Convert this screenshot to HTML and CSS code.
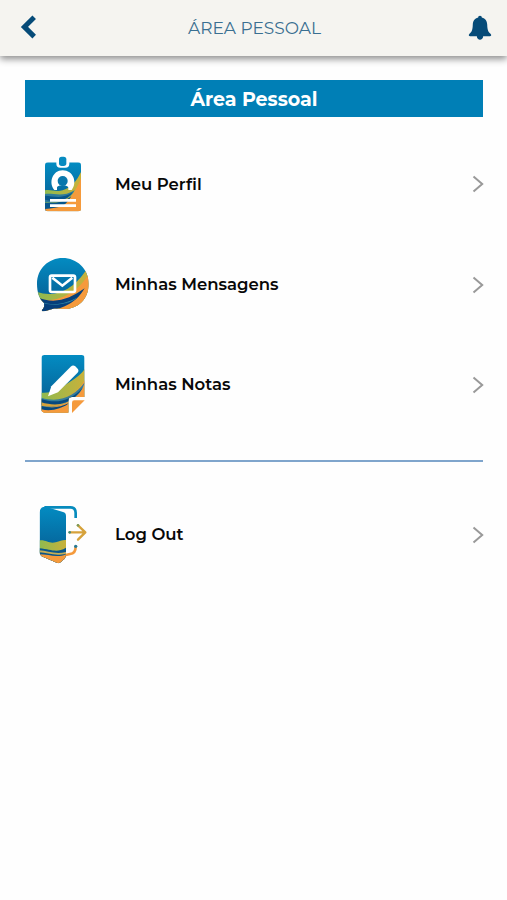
FILE: index.html
```
<!DOCTYPE html>
<html lang="pt">
    <head>
        <meta charset="UTF-8">
        <meta name="viewport" content="width=device-width, initial-scale=1.0">
        <title>Área Pessoal</title>
        <link rel="stylesheet" href="styles.css">
    </head>
    <body>
        <svg class="defs" width="0" height="0">
            <defs>
                <linearGradient id="blue" x1="0" y1="0" x2="0" y2="1">
                    <stop offset="0" stop-color="#038cc2"/>
                    <stop offset="1" stop-color="#07568c"/>
                </linearGradient>
                <linearGradient id="green" x1="0" y1="0" x2="1" y2="0">
                    <stop offset="0" stop-color="#8fba50"/>
                    <stop offset="1" stop-color="#c9b13a"/>
                </linearGradient>
                <clipPath id="card"><rect x="45" y="37" width="108" height="147" rx="9"/></clipPath>
                <clipPath id="bubble"><path d="M98 24C140 24 176 56 176 101C176 148 143 178 99 177C84 177 78 175 70 176C58 178 50 183 40 184C34 184 35 179 39 176C43 172 44 165 42 159C28 146 21 126 21 101C21 56 56 24 98 24Z"/></clipPath>
                <clipPath id="note"><path d="M44 21H154Q164 21 164 31V147H126Q115 147 115 159V194H44Q34 194 34 184V31Q34 21 44 21Z"/></clipPath>
                <clipPath id="door"><path d="M29 40Q28 20 46 20L99 36Q108 38 108 48V162Q108 175 98 181Q90 193 80 188L40 171Q29 167 29 157Z"/></clipPath>
            </defs>
        </svg>

        <header class="header">
            <a class="back" aria-label="Voltar">
                <svg width="17" height="26" viewBox="0 0 17 26">
                    <path d="M14.2 3.2L4.4 12.9L14.2 22.6" fill="none" stroke="#064b78" stroke-width="5" stroke-linejoin="miter" stroke-linecap="butt"/>
                </svg>
            </a>
            <h1 class="title">ÁREA PESSOAL</h1>
            <a class="bell" aria-label="Notificações">
                <svg width="24" height="26" viewBox="0 0 24 26">
                    <path d="M12 .7C13.2 .7 13.8 1.4 13.8 2.6C17.5 3.5 19 6.3 19.2 9.5C19.4 15 20.2 16.8 22.5 18.8C23.8 20 23.2 21.3 21.8 21.3H2.2C.8 21.3 .2 20 1.5 18.8C3.8 16.8 4.6 15 4.8 9.5C5 6.3 6.5 3.5 10.2 2.6C10.2 1.4 10.8 .7 12 .7ZM8.8 21H15.2C15 26 9 26 8.8 21Z" fill="#064b78"/>
                </svg>
            </a>
        </header>

        <main class="content">
            <h2 class="banner">Área Pessoal</h2>

            <div class="menu">
                <a class="item raised">
                    <svg class="icon" viewBox="0 0 195 210">
                        <g clip-path="url(#card)">
                            <rect x="45" y="37" width="108" height="147" fill="url(#blue)"/>
                            <path d="M45 121C62 117 78 127 98 121C125 113 141 91 153 66V184H45Z" fill="url(#green)"/>
                            <path d="M82 184C112 158 140 122 153 84V184Z" fill="#f59a3c"/>
                            <path d="M45 132C72 129 98 143 134 121C121 148 83 162 45 157Z" fill="#2f7c9b"/>
                            <path d="M45 137C72 138 97 149 128 127C112 152 77 159 45 149Z" fill="#07558b"/>
                            <path d="M45 158C76 161 103 156 124 139C106 171 78 184 45 184Z" fill="#07558b"/>
                            <path d="M45 177C90 174 112 166 130 141L153 148V184H45Z" fill="#f59a3c"/>
                        </g>
                        <rect x="79" y="14" width="39" height="39" rx="12" fill="#fff"/>
                        <rect x="87" y="20" width="22" height="28" rx="8" fill="#078bc0"/>
                        <path d="M73 120C55 99 67 61 98 61C130 61 143 98 125 120H115V113C115 103 80 103 81 113V120Z" fill="#fff"/>
                        <circle cx="98" cy="93" r="15" fill="#0877ad"/>
                        <path d="M60 151H138M60 167H138" stroke="#fff" stroke-width="8"/>
                    </svg>
                    <span class="label">Meu Perfil</span>
                    <svg class="arrow" viewBox="0 0 12 18"><path d="M1.5 1.5L10.2 9L1.5 16.5"/></svg>
                </a>

                <a class="item">
                    <svg class="icon" viewBox="0 0 195 210">
                        <g clip-path="url(#bubble)">
                            <rect x="20" y="22" width="158" height="165" fill="url(#blue)"/>
                            <path d="M20 126C84 148 137 108 167 62L180 78V187H20Z" fill="url(#green)"/>
                            <path d="M30 148C87 160 146 125 177 70V187H30Z" fill="#f59a3c"/>
                            <path d="M22 141C73 165 119 147 164 115C133 168 91 175 45 187H30Z" fill="#073f7b"/>
                            <path d="M28 153C75 174 117 156 145 141C116 164 80 169 39 166Z" fill="#3187a5"/>
                            <path d="M41 160C69 167 92 165 116 157C87 174 62 174 43 169Z" fill="#073f7b"/>
                        </g>
                        <rect x="60" y="77" width="75" height="49" rx="5" fill="none" stroke="#fff" stroke-width="8"/>
                        <path d="M67 83L97 107L127 83" fill="none" stroke="#fff" stroke-width="8"/>
                    </svg>
                    <span class="label">Minhas Mensagens</span>
                    <svg class="arrow" viewBox="0 0 12 18"><path d="M1.5 1.5L10.2 9L1.5 16.5"/></svg>
                </a>

                <a class="item">
                    <svg class="icon" viewBox="0 6 195 210">
                        <g clip-path="url(#note)">
                            <rect x="34" y="20" width="130" height="175" fill="url(#blue)"/>
                            <path d="M34 134C72 136 91 122 113 106C137 90 154 80 164 62V195H34Z" fill="url(#green)"/>
                            <path d="M34 155C92 167 143 139 164 96V195H34Z" fill="#f59a3c"/>
                            <path d="M34 149C91 167 136 142 164 103C154 145 113 174 34 184Z" fill="#337d9b"/>
                            <path d="M34 153C79 169 124 158 158 119C130 166 78 176 34 172Z" fill="#07497f"/>
                            <path d="M34 163C62 172 93 171 115 162C88 178 60 178 34 173Z" fill="#d6a23b"/>
                            <path d="M34 174C65 183 93 177 117 165C91 192 60 194 34 188Z" fill="#07497f"/>
                            <path d="M34 184C66 192 94 180 116 168V195H34Z" fill="#f59a3c"/>
                        </g>
                        <path d="M54 145L64 115L122 56Q129 49 136 55L143 62Q148 68 142 75L84 133Z" fill="#fff"/>
                        <path d="M126 195V164Q126 157 133 157H164Z" fill="#f59a3c"/>
                    </svg>
                    <span class="label">Minhas Notas</span>
                    <svg class="arrow" viewBox="0 0 12 18"><path d="M1.5 1.5L10.2 9L1.5 16.5"/></svg>
                </a>
            </div>

            <hr class="divider">

            <div class="menu">
                <a class="item">
                    <svg class="icon" viewBox="0 0 195 210">
                        <path d="M43 22H121Q137 22 137 39V54" fill="none" stroke="#078bbd" stroke-width="8"/>
                        <path d="M137 140Q137 160 120 162L107 165" fill="none" stroke="#f59a3c" stroke-width="8"/>
                        <circle cx="137" cy="139" r="5" fill="#287a94"/>
                        <g clip-path="url(#door)">
                            <rect x="28" y="18" width="81" height="173" fill="url(#blue)"/>
                            <path d="M28 121C51 119 56 132 77 127C91 123 97 119 109 120V192H28Z" fill="url(#green)"/>
                            <path d="M28 145C65 148 79 161 109 143V192H28Z" fill="#07558b"/>
                            <path d="M28 151C53 152 75 165 109 156V161C75 170 53 158 28 157Z" fill="#c5ae55"/>
                            <path d="M28 163C56 163 83 175 109 162V192H28Z" fill="#f59a3c"/>
                        </g>
                        <path d="M119 97H164M144 76L166 97L144 119" fill="none" stroke="#d6a23b" stroke-width="7" stroke-linecap="round" stroke-linejoin="round"/>
                        <circle cx="119" cy="97" r="4" fill="#438b78"/>
                        <circle cx="144" cy="76" r="4" fill="#7e9a59"/>
                    </svg>
                    <span class="label">Log Out</span>
                    <svg class="arrow" viewBox="0 0 12 18"><path d="M1.5 1.5L10.2 9L1.5 16.5"/></svg>
                </a>
            </div>
        </main>
    </body>
</html>
```
FILE: styles.css
```
* {
    box-sizing: border-box;
}

body {
    margin: 0;
    font-family: Montserrat, Inter, sans-serif;
    background-color: #fefefe;
    color: #080808;
}

.defs {
    position: absolute;
}

.header {
    display: flex;
    justify-content: space-between;
    align-items: center;
    height: 56px;
    padding: 0 15px 0 20px;
    background-color: #f5f4f0;
    box-shadow: 0 3px 7px rgba(0, 0, 0, 0.45);
}

.header svg {
    display: block;
}

.back {
    width: 24px;
    padding-bottom: 2px;
}

.title {
    margin: 0 3px 0 0;
    font-size: 17px;
    font-weight: 400;
    color: #3a6f91;
}

.content {
    padding: 24px 23px 0 25px;
}

.banner {
    margin: 0 1px 33px 0;
    height: 37px;
    line-height: 39px;
    background-color: #007fb6;
    color: #fff;
    text-align: center;
    font-size: 19px;
    font-weight: 700;
}

.menu {
    display: flex;
    flex-direction: column;
    gap: 30px;
}

.item {
    display: flex;
    align-items: center;
    height: 70px;
    padding-left: 5px;
}

.icon {
    width: 65px;
    height: 70px;
    margin-right: 20px;
}

.label {
    flex: 1;
    padding-bottom: 2px;
    font-size: 16.5px;
    font-weight: 600;
}

.raised .arrow {
    margin-bottom: 2px;
}

.arrow {
    width: 12px;
    height: 18px;
    fill: none;
    stroke: #999;
    stroke-width: 2;
}

.divider {
    height: 2px;
    margin: 40px 1px 38px 0;
    border: 0;
    background-color: #7fa5cc;
}
```
